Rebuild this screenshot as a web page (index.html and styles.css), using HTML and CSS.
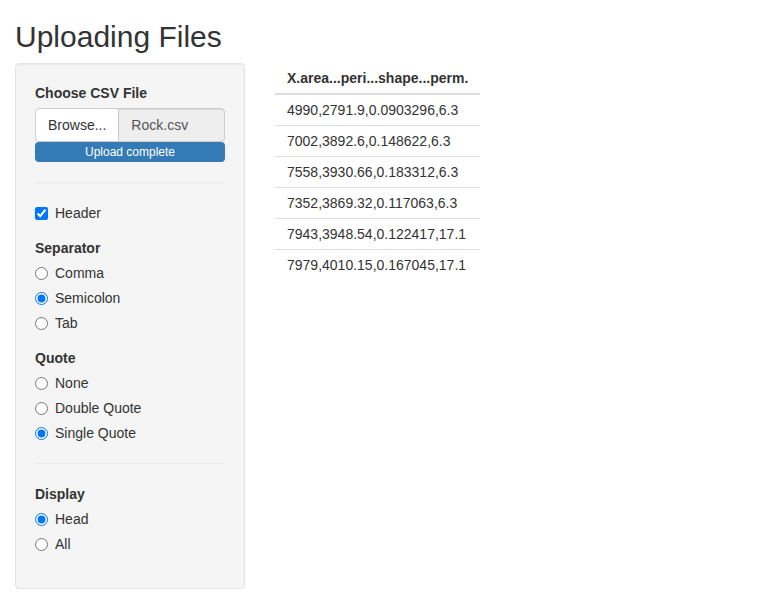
FILE: index.html
```html
<!DOCTYPE html>
<html>
<head>
<meta charset="utf-8">
<title>Uploading Files</title>
<link rel="stylesheet" href="styles.css">
</head>
<body>
<div class="container">
  <h2 class="title">Uploading Files</h2>
  <div class="row">
    <div class="col-side">
      <form class="well">
        <div class="form-group">
          <label class="control-label">Choose CSV File</label>
          <div class="input-group">
            <span class="btn-file">Browse...</span>
            <input class="form-control" type="text" value="Rock.csv" readonly>
          </div>
          <div class="progress"><div class="progress-bar">Upload complete</div></div>
        </div>
        <hr>
        <div class="form-group">
          <div class="checkbox"><label><input type="checkbox" checked><span>Header</span></label></div>
        </div>
        <div class="form-group">
          <label class="control-label">Separator</label>
          <div class="options">
            <div class="radio"><label><input type="radio" name="sep"><span>Comma</span></label></div>
            <div class="radio"><label><input type="radio" name="sep" checked><span>Semicolon</span></label></div>
            <div class="radio"><label><input type="radio" name="sep"><span>Tab</span></label></div>
          </div>
        </div>
        <div class="form-group">
          <label class="control-label">Quote</label>
          <div class="options">
            <div class="radio"><label><input type="radio" name="quote"><span>None</span></label></div>
            <div class="radio"><label><input type="radio" name="quote"><span>Double Quote</span></label></div>
            <div class="radio"><label><input type="radio" name="quote" checked><span>Single Quote</span></label></div>
          </div>
        </div>
        <hr>
        <div class="form-group">
          <label class="control-label">Display</label>
          <div class="options">
            <div class="radio"><label><input type="radio" name="disp" checked><span>Head</span></label></div>
            <div class="radio"><label><input type="radio" name="disp"><span>All</span></label></div>
          </div>
        </div>
      </form>
    </div>
    <div class="col-main">
      <table class="table">
        <thead><tr><th>X.area...peri...shape...perm.</th></tr></thead>
        <tbody>
          <tr><td>4990,2791.9,0.0903296,6.3</td></tr>
          <tr><td>7002,3892.6,0.148622,6.3</td></tr>
          <tr><td>7558,3930.66,0.183312,6.3</td></tr>
          <tr><td>7352,3869.32,0.117063,6.3</td></tr>
          <tr><td>7943,3948.54,0.122417,17.1</td></tr>
          <tr><td>7979,4010.15,0.167045,17.1</td></tr>
        </tbody>
      </table>
    </div>
  </div>
</div>
</body>
</html>
```

FILE: styles.css
```css
* { box-sizing: border-box; }
html, body { margin: 0; padding: 0; }
body {
  font-family: "Liberation Sans", Arial, sans-serif;
  font-size: 14px;
  line-height: 20px;
  color: #333;
  background: #fff;
}
.container { padding: 0 15px; }
.title {
  margin: 20px 0 10px;
  font-size: 30px;
  font-weight: 500;
  line-height: 33px;
}
.row {
  display: grid;
  grid-template-columns: 260px 520px;
  margin: 0 -15px;
  align-items: start;
}
.col-side, .col-main { padding: 0 15px; }

.well {
  display: block;
  padding: 19px;
  margin: 0 0 20px;
  background: #f5f5f5;
  border: 1px solid #e3e3e3;
  border-radius: 4px;
  box-shadow: inset 0 1px 1px rgba(0,0,0,.05);
}
.form-group { margin-bottom: 15px; }
.control-label {
  display: inline-block;
  margin-bottom: 5px;
  font-weight: 700;
}
.input-group { display: flex; height: 34px; }
.btn-file {
  display: block;
  padding: 6px 12px;
  background: #fff;
  border: 1px solid #ccc;
  border-radius: 4px 0 0 4px;
  color: #333;
  white-space: nowrap;
}
.form-control {
  flex: 1;
  min-width: 0;
  margin: 0 0 0 -1px;
  padding: 6px 12px;
  font: inherit;
  color: #555;
  background: #eee;
  border: 1px solid #ccc;
  border-radius: 0 4px 4px 0;
  box-shadow: inset 0 1px 1px rgba(0,0,0,.075);
  outline: none;
}
.progress {
  height: 20px;
  margin: 0;
  border-radius: 4px;
  overflow: hidden;
  background: #f5f5f5;
}
.progress-bar {
  height: 20px;
  background: #337ab7;
  color: #fff;
  font-size: 12px;
  line-height: 20px;
  text-align: center;
}
hr {
  margin: 20px 0;
  border: 0;
  border-top: 1px solid #eaeaea;
}
.checkbox, .radio { margin: 10px 0; }
.radio + .radio { margin-top: -5px; }
.options { margin-top: -10px; }
.checkbox label, .radio label {
  display: flex;
  align-items: center;
  gap: 7px;
  min-height: 20px;
  font-weight: 400;
  cursor: pointer;
}
.checkbox input, .radio input {
  width: 13px;
  height: 13px;
  margin: 0;
  flex: none;
}

.table {
  border-collapse: collapse;
  border-spacing: 0;
  margin-bottom: 20px;
}
.table th, .table td {
  padding: 5px 12px;
  text-align: left;
  line-height: 20px;
  vertical-align: top;
}
.table th {
  font-weight: 700;
  border-bottom: 2px solid #ddd;
}
.table td { border-top: 1px solid #ddd; }
```
